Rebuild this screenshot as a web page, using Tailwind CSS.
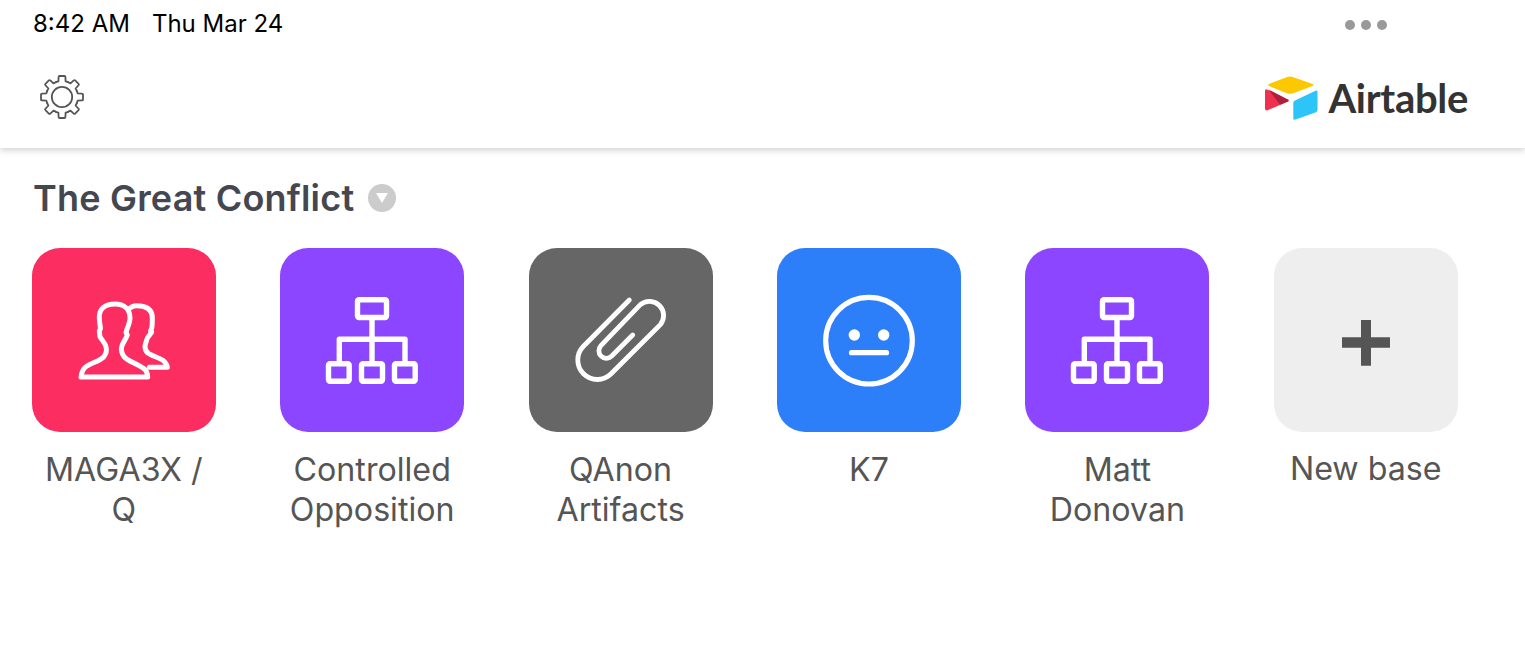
<!DOCTYPE html>
<html lang="en">
<head>
    <meta charset="UTF-8">
    <meta name="viewport" content="width=device-width, initial-scale=1.0">
    <title>Airtable</title>
    <script src="https://cdn.jsdelivr.net/npm/@tailwindcss/browser@4"></script>
</head>
<body class="bg-white h-[650px] overflow-hidden font-['Inter',sans-serif]">
<header class="h-[148px] bg-white shadow-[0_2px_7px_rgba(0,0,0,0.2)] flex flex-col">
    <div class="h-[50px] pl-[33px] pr-[138px] flex items-center justify-between text-black text-[24px]">
        <div class="flex gap-[22px] pb-[3px]">
            <span>8:42 AM</span>
            <span>Thu Mar 24</span>
        </div>
        <div class="flex gap-[6px]">
            <span class="w-[10px] h-[10px] rounded-full bg-[#999]"></span>
            <span class="w-[10px] h-[10px] rounded-full bg-[#999]"></span>
            <span class="w-[10px] h-[10px] rounded-full bg-[#999]"></span>
        </div>
    </div>
    <div class="flex-1 pl-[39px] pr-[57px] flex items-center justify-between pb-[4px]">
        <!-- gear -->
        <svg width="46" height="46" viewBox="-23 -23 46 46" fill="none" stroke="#555" stroke-width="1.8" stroke-linecap="round" stroke-linejoin="round">
            <defs>
                <path id="tooth" d="M-6.1 -14.8A16 16 0 0 1 -3.6 -15.6L-3.4 -20Q-3.4 -21 -2.4 -21H2.4Q3.4 -21 3.4 -20L3.6 -15.6A16 16 0 0 1 6.1 -14.8"/>
            </defs>
            <use href="#tooth"/>
            <use href="#tooth" transform="rotate(45)"/>
            <use href="#tooth" transform="rotate(90)"/>
            <use href="#tooth" transform="rotate(135)"/>
            <use href="#tooth" transform="rotate(180)"/>
            <use href="#tooth" transform="rotate(225)"/>
            <use href="#tooth" transform="rotate(270)"/>
            <use href="#tooth" transform="rotate(315)"/>
            <circle r="10.2"/>
        </svg>
        <div class="flex items-center gap-[10px] mt-[1px]">
            <svg width="54" height="46" viewBox="1264 75 54 46">
                <path d="M1286.5 77.2Q1290 75.8 1293.5 77.2L1312.5 84Q1314.5 85 1312.5 86L1293 93.2Q1290 94.2 1287 93.2L1269 86Q1267.5 85 1269 84Z" fill="#fcc800"/>
                <path d="M1295 100.6L1315.5 90.8Q1317.5 90 1317.5 92V110Q1317.5 111.6 1316 112.2L1295.5 119.6Q1293.3 120.2 1293.3 118.4V102.8Q1293.3 101.4 1295 100.6Z" fill="#2dc4f7"/>
                <path d="M1265 91Q1265 88.6 1267 89.4L1288 100.2Q1289 101 1288 101.6L1267.5 110.2Q1265 111 1265 108.6Z" fill="#f0304f"/>
                <path d="M1268.5 89.4L1288.5 99.8Q1289 100.8 1288 101.6L1280 104.8Z" fill="#b01f3a"/>
            </svg>
            <span class="text-[#333] text-[40px] font-bold tracking-[-0.3px] leading-none font-['Lato',sans-serif]">Airtable</span>
        </div>
    </div>
</header>

<main>
    <div class="mt-[28px] pl-[33px] flex items-center gap-[14px] h-[44px]">
        <h1 class="text-[36px] font-semibold text-[#44474f] tracking-[0.2px]">The Great Conflict</h1>
        <span class="w-[28px] h-[28px] rounded-full bg-[#ccc] flex items-center justify-center">
            <svg width="14" height="12" viewBox="0 0 14 12"><path d="M1 1H13L7 11Z" fill="#fff"/></svg>
        </span>
    </div>

    <div class="mt-[28px] pl-[31.8px] flex gap-[64.4px]">
        <div class="w-[184px] flex flex-col items-center">
            <div class="w-[184px] h-[184px] rounded-[28px] bg-[#fc2d60]">
                <svg viewBox="0 0 184 184" fill="none" stroke="#fff" stroke-width="5" stroke-linecap="round" stroke-linejoin="round">
                    <path d="M49 129H115.7Q115.5 122.5 111 120C104 115.5 96 113 92 108.7C89.7 105 89 101 89.7 98.7C91 94 94 91 95.3 87L94 84.5L95.3 80.3C97 76 98 73 98 70.3C98 61 92 56 83 56C73 56 67.3 61 67.3 69C67.3 73 68 77 68.5 80.5L67.3 83L68 88.7C70 92 73 95 74 98.7C75 102 74 106 71.3 109.3C66 114 58 115 53 119.5C50.5 122 49.5 125 49 129Z"/>
                    <path d="M96.3 62C98.5 59 101 57.7 104.7 57.7C114 57.7 120.3 61 120.3 70C120.3 74 120.5 77 119.7 80.3L118.5 83L119.7 84C118 87 115 89 114.7 92C113.7 95 113 97 113 98.7C113 101 114 103.5 116.3 105.3C120 108 127 109.5 131.3 112.5C134 115 135 117 135.3 119.3H117.3"/>
                </svg>
            </div>
            <p class="mt-[18px] w-[176px] text-center text-[32.2px] leading-[40px] text-[#555]">MAGA3X / Q</p>
        </div>

        <div class="w-[184px] flex flex-col items-center">
            <div class="w-[184px] h-[184px] rounded-[28px] bg-[#8c46ff]">
                <svg viewBox="0 0 184 184" fill="none" stroke="#fff" stroke-width="5.4" stroke-linejoin="round">
                    <rect x="77.5" y="51.8" width="29" height="17.7" rx="1.5"/>
                    <path d="M92 70V113M59.3 113V91.3H125V113"/>
                    <rect x="48.5" y="115.8" width="20.7" height="17.4" rx="1.5"/>
                    <rect x="81.5" y="115.8" width="21" height="17.4" rx="1.5"/>
                    <rect x="114.5" y="115.8" width="20.7" height="17.4" rx="1.5"/>
                </svg>
            </div>
            <p class="mt-[18px] w-[176px] text-center text-[32.2px] leading-[40px] text-[#555]">Controlled Opposition</p>
        </div>

        <div class="w-[184px] flex flex-col items-center">
            <div class="w-[184px] h-[184px] rounded-[28px] bg-[#666]">
                <svg viewBox="0 0 184 184" fill="none" stroke="#fff" stroke-width="4.8" stroke-linecap="round">
                    <path d="M100.3 52L54.5 98.2A19.5 19.5 0 0 0 82.1 125.8L131.3 76.7A14.2 14.2 0 0 0 111.3 56.7L71.9 97.7A7.5 7.5 0 0 0 82.5 108.3L103.7 87"/>
                </svg>
            </div>
            <p class="mt-[18px] w-[176px] text-center text-[32.2px] leading-[40px] text-[#555]">QAnon Artifacts</p>
        </div>

        <div class="w-[184px] flex flex-col items-center">
            <div class="w-[184px] h-[184px] rounded-[28px] bg-[#2d7ff9]">
                <svg viewBox="0 0 184 184" fill="none" stroke="#fff" stroke-width="5.2">
                    <circle cx="92" cy="92.7" r="43.3"/>
                    <circle cx="77.3" cy="87" r="5.7" fill="#fff" stroke="none"/>
                    <circle cx="106.7" cy="87" r="5.7" fill="#fff" stroke="none"/>
                    <path d="M74.5 104.7H109.5" stroke-linecap="round"/>
                </svg>
            </div>
            <p class="mt-[18px] w-[176px] text-center text-[32.2px] leading-[40px] text-[#555]">K7</p>
        </div>

        <div class="w-[184px] flex flex-col items-center">
            <div class="w-[184px] h-[184px] rounded-[28px] bg-[#8c46ff]">
                <svg viewBox="0 0 184 184" fill="none" stroke="#fff" stroke-width="5.4" stroke-linejoin="round">
                    <rect x="77.5" y="51.8" width="29" height="17.7" rx="1.5"/>
                    <path d="M92 70V113M59.3 113V91.3H125V113"/>
                    <rect x="48.5" y="115.8" width="20.7" height="17.4" rx="1.5"/>
                    <rect x="81.5" y="115.8" width="21" height="17.4" rx="1.5"/>
                    <rect x="114.5" y="115.8" width="20.7" height="17.4" rx="1.5"/>
                </svg>
            </div>
            <p class="mt-[18px] w-[176px] text-center text-[32.2px] leading-[40px] text-[#555]">Matt Donovan</p>
        </div>

        <div class="w-[184px] flex flex-col items-center">
            <div class="w-[184px] h-[184px] rounded-[28px] bg-[#eee]">
                <svg viewBox="0 0 184 184" fill="#555">
                    <path d="M87 72H97V89.3H116V99.7H97V117.7H87V99.7H68V89.3H87Z"/>
                </svg>
            </div>
            <p class="mt-[17px] w-[176px] text-center text-[32.2px] leading-[40px] text-[#555]">New base</p>
        </div>
    </div>
</main>
</body>
</html>
